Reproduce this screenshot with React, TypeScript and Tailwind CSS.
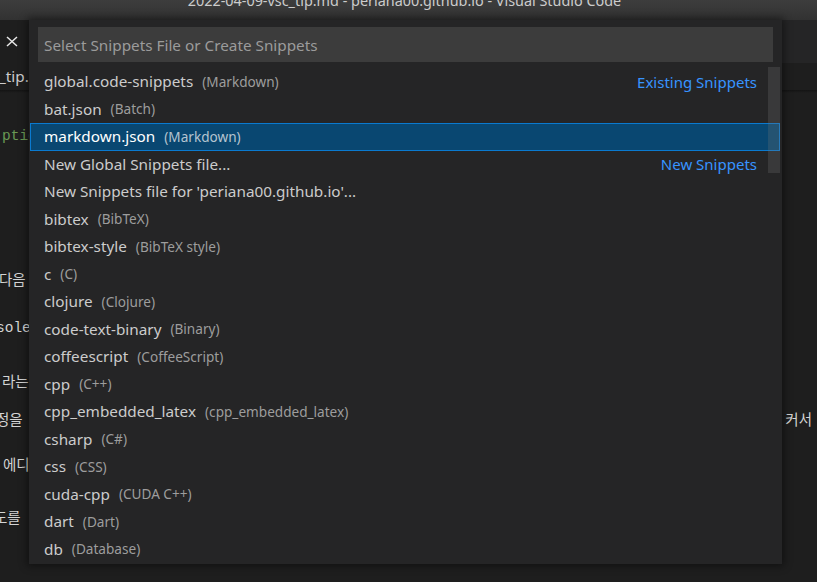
import * as React from "react";

type Pick = {
  label: string;
  desc?: string;
  right?: string;
  selected?: boolean;
};

const picks: Pick[] = [
  { label: "global.code-snippets", desc: "(Markdown)", right: "Existing Snippets" },
  { label: "bat.json", desc: "(Batch)" },
  { label: "markdown.json", desc: "(Markdown)", selected: true },
  { label: "New Global Snippets file...", right: "New Snippets" },
  { label: "New Snippets file for 'periana00.github.io'..." },
  { label: "bibtex", desc: "(BibTeX)" },
  { label: "bibtex-style", desc: "(BibTeX style)" },
  { label: "c", desc: "(C)" },
  { label: "clojure", desc: "(Clojure)" },
  { label: "code-text-binary", desc: "(Binary)" },
  { label: "coffeescript", desc: "(CoffeeScript)" },
  { label: "cpp", desc: "(C++)" },
  { label: "cpp_embedded_latex", desc: "(cpp_embedded_latex)" },
  { label: "csharp", desc: "(C#)" },
  { label: "css", desc: "(CSS)" },
  { label: "cuda-cpp", desc: "(CUDA C++)" },
  { label: "dart", desc: "(Dart)" },
  { label: "db", desc: "(Database)" },
];

function CloseIcon() {
  return (
    <svg width="12" height="12" viewBox="0 0 12 12" fill="none">
      <path d="M1 1 L11 10 M11 1 L1 10" stroke="#e8e8e8" strokeWidth="1.5" />
    </svg>
  );
}

function EditorText({ children, className = "" }: { children: React.ReactNode; className?: string }) {
  return (
    <div className={"h-[24px] leading-[24px] flex items-center justify-between whitespace-nowrap " + className}>
      {children}
    </div>
  );
}

function QuickPick() {
  return (
    <div className="absolute left-[29px] top-[20px] w-[753px] h-[544px] bg-[#252526] shadow-[0_0_8px_2px_rgba(0,0,0,0.45)]">
      <div className="mx-[9px] mt-[7px] h-[35px] bg-[#3c3c3c] flex items-center px-[6px] pt-[1px] text-[15.3px] text-[#9b9b9b]">
        Select Snippets File or Create Snippets
      </div>

      <div className="relative mt-[6px] ml-[1px] mr-[2px]">
        {picks.map((p) => (
          <div
            key={p.label}
            className={
              p.selected
                ? "h-[27.5px] flex items-center pl-[13px] pr-[22px] bg-[#094771] border border-[#0a7ad0] text-white"
                : "h-[27.5px] flex items-center pl-[14px] pr-[23px] text-[#cccccc]"
            }
          >
            <span className="text-[15.3px] whitespace-nowrap">{p.label}</span>
            {p.desc && (
              <span className={"ml-[9px] text-[13.6px] whitespace-nowrap " + (p.selected ? "text-[#b5c4d0]" : "text-[#9d9d9d]")}>
                {p.desc}
              </span>
            )}
            {p.right && <span className="ml-auto text-[15px] text-[#3794ff]">{p.right}</span>}
          </div>
        ))}

        {/* scrollbar slider */}
        <div className="absolute right-0 top-[-1px] w-[12px] h-[106px] bg-[rgba(121,121,121,0.25)]" />
      </div>
    </div>
  );
}

export default function App() {
  return (
    <div className="relative w-[817px] h-[582px] overflow-hidden bg-[#1e1e1e] font-['Noto_Sans',sans-serif]">
      {/* title bar */}
      <div className="h-[20px] bg-gradient-to-b from-[#3d3d3d] to-[#323232] flex justify-center overflow-hidden">
        <span className="ml-[-8px] mt-[-7px] leading-[15px] text-[14.4px] text-[#cccccc] whitespace-nowrap">
          2022-04-09-vsc_tip.md - periana00.github.io - Visual Studio Code
        </span>
      </div>

      {/* tabs */}
      <div className="h-[43px] bg-[#252526] flex">
        <div className="w-[29px] bg-[#1e1e1e] flex items-center pl-[6px]">
          <CloseIcon />
        </div>
      </div>

      {/* breadcrumbs */}
      <div className="h-[27px] flex items-center text-[15.3px] text-[#cccccc] whitespace-nowrap">
        <span className="ml-[-1px]">_tip.md</span>
      </div>
      <div className="h-[3px] bg-gradient-to-b from-[rgba(0,0,0,0.35)] to-transparent" />

      {/* editor content under the quick pick */}
      <div className="font-['Liberation_Mono','Noto_Sans_CJK_KR',monospace] text-[14.5px] text-[#d4d4d4]">
        <div className="h-[31px]" />
        <EditorText className="text-[#6a9955]">
          <span className="ml-[2px]">ption:</span>
        </EditorText>
        <div className="h-[121px]" />
        <EditorText>
          <span className="ml-[-1px]">다음</span>
        </EditorText>
        <div className="h-[23px]" />
        <EditorText>
          <span className="ml-[-4px]">sole</span>
        </EditorText>
        <div className="h-[31px]" />
        <EditorText>
          <span className="ml-[2px]">라는</span>
        </EditorText>
        <div className="h-[14px]" />
        <EditorText>
          <span className="ml-[-4px]">정을</span>
          <span className="mr-[5px]">커서</span>
        </EditorText>
        <div className="h-[21px]" />
        <EditorText>
          <span className="ml-[3px]">에디</span>
        </EditorText>
        <div className="h-[29px]" />
        <EditorText>
          <span className="ml-[-6px]">도를</span>
        </EditorText>
      </div>

      <QuickPick />
    </div>
  );
}
